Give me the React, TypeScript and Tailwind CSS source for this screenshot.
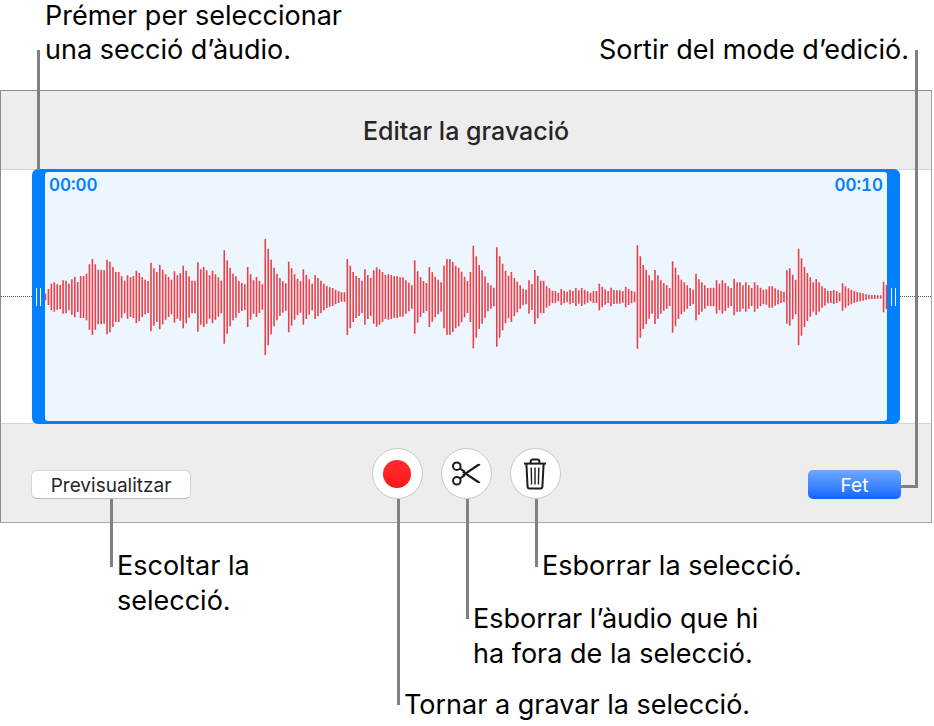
import type { ReactNode } from 'react'

// Half height of every bar, in thirds of a pixel
const LEVELS = [
  10, 24, 40, 44, 38, 36, 50, 49, 40, 53, 61, 45, 63, 63, 70, 98, 114, 98, 82, 82,
  80, 112, 106, 90, 75, 75, 62, 49, 65, 59, 63, 79, 72, 60, 52, 48, 103, 86, 75, 97,
  82, 68, 60, 52, 77, 65, 71, 94, 79, 62, 49, 49, 104, 83, 90, 80, 65, 79, 68, 59,
  49, 140, 110, 88, 70, 62, 48, 42, 38, 90, 68, 50, 60, 48, 38, 174, 145, 112, 88, 70,
  57, 47, 41, 106, 86, 68, 55, 47, 83, 66, 53, 40, 66, 57, 49, 40, 33, 29, 27, 22,
  18, 14, 14, 114, 94, 75, 63, 57, 49, 83, 66, 57, 80, 89, 83, 75, 66, 68, 66, 62,
  63, 59, 59, 50, 43, 35, 110, 77, 60, 48, 42, 90, 74, 61, 52, 44, 94, 114, 114, 105,
  94, 88, 76, 61, 48, 75, 154, 122, 96, 80, 62, 43, 35, 28, 149, 122, 100, 79, 64, 75,
  57, 46, 35, 25, 22, 50, 39, 81, 64, 49, 49, 32, 26, 19, 18, 13, 24, 19, 16, 22,
  18, 27, 20, 27, 22, 17, 13, 18, 18, 40, 31, 23, 18, 28, 21, 20, 20, 17, 31, 24,
  19, 16, 155, 122, 96, 82, 65, 50, 81, 65, 50, 41, 35, 27, 107, 88, 66, 52, 44, 35,
  27, 22, 70, 53, 44, 35, 27, 28, 28, 50, 40, 50, 42, 32, 27, 55, 44, 44, 35, 44,
  35, 27, 44, 35, 28, 22, 23, 32, 32, 26, 22, 18, 16, 80, 86, 67, 52, 145, 116, 90,
  72, 59, 44, 54, 44, 32, 26, 19, 18, 21, 18, 13, 41, 32, 26, 22, 18, 15, 13, 11,
  8, 7, 6, 6, 5, 5, 46, 36,
]

const WAVE_W = 842
const WAVE_H = 118
const STEP   = (WAVE_W - 1) / (LEVELS.length - 1)

function Waveform() {
  const d = LEVELS.map((level, i) => {
    const x = (0.5 + i * STEP).toFixed(2)
    const half = level / 3
    return `M${x} ${(WAVE_H / 2 - half).toFixed(1)}V${(WAVE_H / 2 + half).toFixed(1)}`
  }).join('')

  return (
    <svg
      viewBox={`0 0 ${WAVE_W} ${WAVE_H}`}
      preserveAspectRatio="none"
      className="block w-full h-[118px]"
      aria-hidden="true"
    >
      <path d={d} stroke="#ee3e46" strokeWidth="1.6" fill="none" />
    </svg>
  )
}

function Handle({ label }: { label: string }) {
  return (
    <button type="button" aria-label={label} className="w-[13px] shrink-0 flex items-center justify-center gap-[3px] cursor-ew-resize">
      <span className="w-px h-[18px] bg-white" />
      <span className="w-px h-[18px] bg-white" />
    </button>
  )
}

function DottedLine({ className }: { className: string }) {
  return <div className={`border-t border-dotted border-[#555] ${className}`} />
}

interface CalloutProps { line: string; text: string; children: ReactNode }

// Leader line going down from a control, with its text to the right of the end
function Callout({ line, text, children }: CalloutProps) {
  return (
    <div className={`absolute top-full w-[3px] bg-[#808080] ${line}`}>
      <p className={`absolute left-[7px] whitespace-nowrap ${text}`}>{children}</p>
    </div>
  )
}

function RoundButton({ label, icon, children }: { label: string; icon: ReactNode; children: ReactNode }) {
  return (
    <div className="relative">
      <button
        type="button"
        aria-label={label}
        className="size-[51px] rounded-full bg-white border border-[#c8c8c8] flex items-center justify-center"
      >
        {icon}
      </button>
      {children}
    </div>
  )
}

function ScissorsIcon() {
  return (
    <svg width="29" height="25" viewBox="0 0 29 25" fill="none" stroke="#1c1c1c" aria-hidden="true">
      <circle cx="4.8" cy="5.2" r="3.8" strokeWidth="2" />
      <circle cx="4.8" cy="19.8" r="3.8" strokeWidth="2" />
      <path d="M8 7.6L13 10.8M8 17.4L13 14.2" strokeWidth="2" />
      <path d="M10.2 13.5L24.8 3.4Q27 2.2 28.4 3.2Q28.4 4.2 27.2 4.8L11.4 15.2Z" fill="#1c1c1c" stroke="none" />
      <path d="M10.2 11.5L24.8 21.6Q27 22.8 28.4 21.8Q28.4 20.8 27.2 20.2L11.4 9.8Z" fill="#1c1c1c" stroke="none" />
    </svg>
  )
}

function TrashIcon() {
  return (
    <svg width="24" height="32" viewBox="0 0 24 32" fill="none" stroke="#1c1c1c" aria-hidden="true">
      <path d="M1 5.6H23" strokeWidth="2" />
      <path d="M7.6 5.4V3.6Q7.6 1.6 9.6 1.6H14.4Q16.4 1.6 16.4 3.6V5.4" strokeWidth="2" />
      <path d="M3.4 6L4.6 28.8Q4.7 30.4 6.4 30.4H17.6Q19.3 30.4 19.4 28.8L20.6 6" strokeWidth="2" />
      <path d="M8.2 9.6L8.6 26.6M12 9.6V26.6M15.8 9.6L15.4 26.6" strokeWidth="1.4" />
    </svg>
  )
}

export default function App() {
  return (
    <main className="pr-0.5 pb-[203px] bg-white text-black text-[27px] leading-[35px] font-['Inter','Liberation_Sans',sans-serif]">
      {/* Callouts above the window */}
      <div className="h-[90px] flex items-end justify-between pl-[45px] pr-[23px] pb-[23px] leading-[34px]">
        <p>Prémer per seleccionar<br />una secció d’àudio.</p>
        <p>Sortir del mode d’edició.</p>
      </div>

      <section className="relative border border-[#8c8c8c] border-b-[#a8a8a8] border-r-[#a8a8a8] bg-[#ededed]">
        <h1 className="h-[78px] pt-0.5 flex items-center justify-center text-[25px] font-medium text-[#262626]">
          Editar la gravació
        </h1>

        {/* Track */}
        <div className="bg-white border-y border-[#d4d4d4] flex items-center">
          <DottedLine className="w-[31px]" />
          <div className="flex-1 -my-px h-[255px] flex rounded-[6px] bg-[#0080ff]">
            <Handle label="Inici de la selecció" />
            <div className="flex-1 min-w-0 my-[3px] rounded-[3px] bg-[#edf5ff] flex flex-col justify-between">
              <div className="h-[26px] pt-px flex items-center justify-between px-1 text-[17px] font-semibold tabular-nums text-[#0080ff]">
                <time>00:00</time>
                <time>00:10</time>
              </div>
              <Waveform />
              <div className="h-[26px]" />
            </div>
            <Handle label="Final de la selecció" />
          </div>
          <DottedLine className="w-[31px]" />
        </div>

        {/* Controls */}
        <div className="h-[98px] flex items-end justify-between pb-[23px] px-[30px] text-[19px]">
          <div className="flex-1 flex">
            <div className="relative">
              <button type="button" className="w-[160px] h-[29px] pt-0.5 rounded-[6px] bg-white border border-[#d6d6d6] border-b-[#bdbdbd] flex items-center justify-center text-[#262626]">
                Previsualitzar
              </button>
              <Callout line="left-[79px] h-[68px]" text="top-[49px] text-[27px]">Escoltar la<br />selecció.</Callout>
            </div>
          </div>

          <div className="flex gap-[18px] text-[27px]">
            <RoundButton label="Gravar" icon={<span className="size-7 rounded-full bg-linear-to-b from-[#ff2d2d] to-[#ff1414]" />}>
              <Callout line="left-1/2 h-[206px]" text="top-[188px]">Tornar a gravar la selecció.</Callout>
            </RoundButton>
            <RoundButton label="Retallar" icon={<ScissorsIcon />}>
              <Callout line="left-1/2 h-[120px]" text="top-[102px]">Esborrar l’àudio que hi<br />ha fora de la selecció.</Callout>
            </RoundButton>
            <RoundButton label="Esborrar" icon={<TrashIcon />}>
              <Callout line="left-1/2 h-[68px]" text="top-[49px]">Esborrar la selecció.</Callout>
            </RoundButton>
          </div>

          <div className="flex-1 flex justify-end">
            <button type="button" className="w-[93px] h-[29px] pt-0.5 rounded-[5px] bg-linear-to-b from-[#6ea8ff] to-[#0a66ff] flex items-center justify-center text-white">
              Fet
            </button>
          </div>
        </div>

        {/* Leader lines of the upper callouts */}
        <div className="absolute left-[36px] -top-[41px] w-[3px] h-[120px] bg-[#808080]" />
        <div className="absolute right-[13px] -top-[41px] bottom-[34px] w-[17px] border-[#808080] border-b-[3px] border-r-[3px]" />
      </section>
    </main>
  )
}
